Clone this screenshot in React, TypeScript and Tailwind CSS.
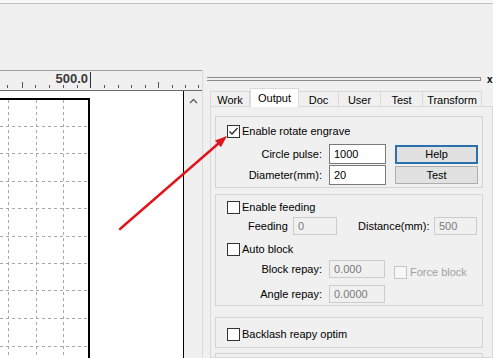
import React from 'react';

const tabs = [
  { label: 'Work', w: 'w-[40px]' },
  { label: 'Output', w: 'w-[49px]', active: true },
  { label: 'Doc', w: 'w-[40px]' },
  { label: 'User', w: 'w-[42px]' },
  { label: 'Test', w: 'w-[42px]' },
  { label: 'Transform', w: 'w-[59px]' },
];

function CheckBox({ checked = false, disabled = false }: { checked?: boolean; disabled?: boolean }) {
  return (
    <span
      className={`w-[13px] h-[13px] shrink-0 flex items-center justify-center border ${
        disabled ? 'border-[#c4c4c4] bg-[#f7f7f7]' : 'border-[#333333] bg-white'
      }`}
    >
      {checked && (
        <svg width="11" height="11" viewBox="0 0 11 11">
          <polyline points="1.5,5.5 4,8 9.5,2" fill="none" stroke="#2b2b2b" strokeWidth="1.3" />
        </svg>
      )}
    </span>
  );
}

function TextBox({ value, w, h, disabled = false }: { value: string; w: string; h: string; disabled?: boolean }) {
  return (
    <div
      className={`${w} ${h} shrink-0 flex items-center pl-[4px] border ${
        disabled ? 'border-[#cccccc] bg-[#f0f0f0] text-[#7a7a7a]' : 'border-[#7a7a7a] bg-white text-black'
      }`}
    >
      {value}
    </div>
  );
}

function Ruler() {
  const small = [7, 35, 49, 63, 77, 104, 118, 131, 145, 172, 185, 198];
  return (
    <div className="h-[21px] border-t border-[#a0a0a0] border-b border-b-[#6a6a6a] bg-[#f0f0f0]">
      <svg width="202" height="19" className="block">
        {small.map((x) => (
          <line key={x} x1={x + 0.5} y1="14" x2={x + 0.5} y2="17" stroke="#555" strokeWidth="1" />
        ))}
        <line x1="22.5" y1="11" x2="22.5" y2="17" stroke="#555" strokeWidth="1" />
        <line x1="158.5" y1="11" x2="158.5" y2="17" stroke="#555" strokeWidth="1" />
        <line x1="90.5" y1="1" x2="90.5" y2="17" stroke="#333" strokeWidth="1" />
        <text
          x="88"
          y="12"
          textAnchor="end"
          fontFamily="'Liberation Sans', Arial, sans-serif"
          fontWeight="bold"
          fontSize="13"
          fill="#3a3a3a"
        >
          500.0
        </text>
      </svg>
    </div>
  );
}

function CanvasGrid() {
  const rows = [35, 62, 90, 117, 145, 172, 199, 227, 255];
  const cols = [8, 36, 63];
  return (
    <svg width="183" height="267" className="block">
      {rows.map((y) => (
        <line key={y} x1="0" y1={y + 0.5} x2="88" y2={y + 0.5} stroke="#a8a8a8" strokeDasharray="3 3" />
      ))}
      {cols.map((x) => (
        <line key={x} x1={x + 0.5} y1="9" x2={x + 0.5} y2="267" stroke="#a8a8a8" strokeDasharray="3 3" />
      ))}
      <line x1="0" y1="8" x2="90" y2="8" stroke="#000" strokeWidth="2" />
      <line x1="89" y1="7" x2="89" y2="267" stroke="#000" strokeWidth="2" />
    </svg>
  );
}

function Group({ h, className = '', children }: { h: string; className?: string; children?: React.ReactNode }) {
  return <div className={`w-[268px] ${h} shrink-0 border border-[#d5d5d5] flex flex-col ${className}`}>{children}</div>;
}

function Panel() {
  return (
    <div className="flex-1 flex flex-col pl-[7px] pr-[8px]">
      {/* docking header */}
      <div className="h-[17px] flex items-start">
        <div className="ml-[-3px] mt-[7px] w-[274px] h-[4px] border-y border-r border-[#8c8c8c]" />
        <span className="ml-[6px] mt-[5px] text-[10px] font-bold leading-[10px]">x</span>
      </div>

      {/* tabs */}
      <div className="h-[19px] flex items-end">
        {tabs.map((t) =>
          t.active ? (
            <div
              key={t.label}
              className={`${t.w} h-[19px] -mb-px z-10 bg-white border border-b-0 border-[#d9d9d9] flex items-start justify-center pt-[3px] leading-[12px]`}
            >
              {t.label}
            </div>
          ) : (
            <div
              key={t.label}
              className={`${t.w} h-[15px] border-t border-r first:border-l border-[#d9d9d9] bg-[#f0f0f0] flex items-start justify-center pt-[2px] leading-[12px]`}
            >
              {t.label}
            </div>
          )
        )}
      </div>

      {/* tab page */}
      <div className="flex-1 border border-[#d9d9d9] bg-[#f0f0f0] pl-[4px] pt-[9px] flex flex-col overflow-hidden">
        <Group h="h-[72px]">
          <div className="h-[13px] mt-[8px] pl-[11px] flex items-center gap-[2px]">
            <CheckBox checked />
            <span>Enable rotate engrave</span>
          </div>
          <div className="mt-[6px] flex items-center">
            <span className="w-[106px] text-right">Circle pulse:</span>
            <div className="ml-[7px]">
              <TextBox value="1000" w="w-[57px]" h="h-[20px]" />
            </div>
            <button className="ml-[9px] w-[83px] h-[19px] bg-[#e1e1e1] border-2 border-[#2a6fae] flex items-center justify-center">
              Help
            </button>
          </div>
          <div className="mt-[1px] flex items-center">
            <span className="w-[106px] text-right">Diameter(mm):</span>
            <div className="ml-[7px]">
              <TextBox value="20" w="w-[57px]" h="h-[20px]" />
            </div>
            <button className="ml-[9px] w-[83px] h-[18px] bg-[#e1e1e1] border border-[#adadad] flex items-center justify-center">
              Test
            </button>
          </div>
        </Group>

        <Group h="h-[112px]" className="mt-[6px]">
          <div className="h-[13px] mt-[6px] pl-[11px] flex items-center gap-[2px]">
            <CheckBox />
            <span>Enable feeding</span>
          </div>
          <div className="mt-[3px] h-[18px] flex items-center">
            <span className="ml-[32px] w-[45px]">Feeding</span>
            <TextBox value="0" w="w-[44px]" h="h-[18px]" disabled />
            <span className="ml-[21px] w-[76px]">Distance(mm):</span>
            <TextBox value="500" w="w-[43px]" h="h-[18px]" disabled />
          </div>
          <div className="h-[13px] mt-[8px] pl-[11px] flex items-center gap-[2px]">
            <CheckBox />
            <span>Auto block</span>
          </div>
          <div className="mt-[4px] h-[18px] flex items-center">
            <span className="w-[106px] text-right">Block repay:</span>
            <div className="ml-[7px]">
              <TextBox value="0.000" w="w-[56px]" h="h-[18px]" disabled />
            </div>
            <div className="ml-[9px] mt-[6px] flex items-center gap-[3px] text-[#a0a0a0]">
              <CheckBox disabled />
              <span>Force block</span>
            </div>
          </div>
          <div className="mt-[7px] h-[18px] flex items-center">
            <span className="w-[106px] text-right">Angle repay:</span>
            <div className="ml-[7px]">
              <TextBox value="0.0000" w="w-[56px]" h="h-[18px]" disabled />
            </div>
          </div>
        </Group>

        <Group h="h-[31px]" className="mt-[11px]">
          <div className="h-[13px] mt-[10px] pl-[11px] flex items-center gap-[2px]">
            <CheckBox />
            <span>Backlash reapy optim</span>
          </div>
        </Group>

        <Group h="h-[20px]" className="mt-[5px]" />
      </div>
    </div>
  );
}

export default function App() {
  return (
    <div className="relative w-[493px] h-[358px] overflow-hidden bg-[#f0f0f0] font-['Liberation_Sans',Arial,sans-serif] text-[11px] leading-[13px] text-black">
      {/* toolbar strip */}
      <div className="h-[70px] pt-[3px] bg-[#f7f7f7]">
        <div className="h-full border-t border-[#c2c2c2] bg-[#f0f0f0]" />
      </div>

      <div className="flex h-[288px]">
        {/* drawing area */}
        <div className="w-[203px] flex flex-col border-r border-[#dadada]">
          <Ruler />
          <div className="flex flex-1 min-h-0">
            <div className="w-[184px] bg-white border-r border-black overflow-hidden">
              <CanvasGrid />
            </div>
            <div className="flex-1 flex justify-center pt-[7px]">
              <svg width="9" height="6" viewBox="0 0 9 6">
                <polyline points="1,5 4.5,1.5 8,5" fill="none" stroke="#606060" strokeWidth="1.4" />
              </svg>
            </div>
          </div>
        </div>

        <Panel />
      </div>

      {/* red annotation arrow */}
      <svg width="493" height="358" className="absolute inset-0 pointer-events-none">
        <line x1="120" y1="229" x2="219" y2="143" stroke="#e0151b" strokeWidth="2.4" strokeLinecap="round" />
        <polygon points="227,136 220.9,147.3 215,140.5" fill="#e0151b" />
      </svg>
    </div>
  );
}
